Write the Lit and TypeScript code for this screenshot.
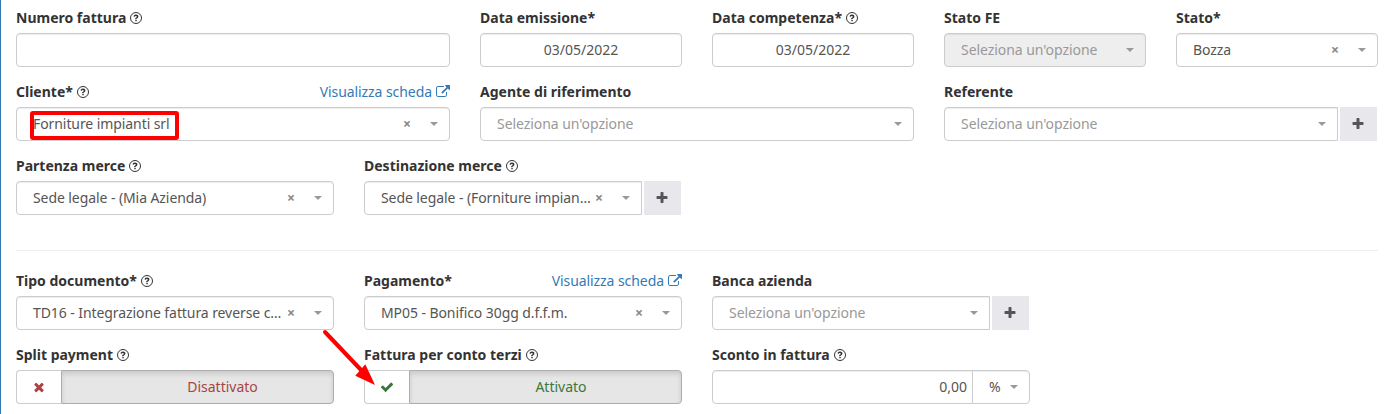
import { LitElement, html, svg, css, nothing } from "lit";
import { customElement } from "lit/decorators.js";

const shapes = {
  help: svg`<circle cx="768" cy="896" r="704" fill="none" stroke="currentColor" stroke-width="128"/><path transform="translate(-8 116) scale(.87)" d="M1004 1356v-142q0-14-9-23t-23-9h-152q-14 0-23 9t-9 23v142q0 14 9 23t23 9h152q14 0 23-9t9-23zm256-652q0-88-55.500-163t-138.500-116-170-41q-243 0-371 213-15 24 8 42l112 85q7 6 19 6 16 0 25-12 53-68 86-92 34-24 96-24 58 0 100.500 31t42.500 69q0 38-20 61t-68 45q-63 28-115.500 86.500t-52.500 125.500v26q0 14 9 23t23 9h152q14 0 23-9t9-23q0-19 21.500-49.500t54.500-49.500q32-18 49-28.500t46-35 44.500-48 28-60.500 12.500-81z"/>`,
  link: svg`<path d="M1408 928v320q0 119-84.500 203.500t-203.500 84.500h-832q-119 0-203.500-84.500t-84.500-203.500v-832q0-119 84.500-203.500t203.500-84.500h704q14 0 23 9t9 23v64q0 14-9 23t-23 9h-704q-66 0-113 47t-47 113v832q0 66 47 113t113 47h832q66 0 113-47t47-113v-320q0-14 9-23t23-9h64q14 0 23 9t9 23zm384-864v512q0 26-19 45t-45 19-45-19l-176-176-652 652q-10 10-23 10t-23-10l-114-114q-10-10-10-23t10-23l652-652-176-176q-19-19-19-45t19-45 45-19h512q26 0 45 19t19 45z"/>`,
  plus: svg`<path d="M1600 736v192q0 40-28 68t-68 28h-416v416q0 40-28 68t-68 28h-192q-40 0-68-28t-28-68v-416h-416q-40 0-68-28t-28-68v-192q0-40 28-68t68-28h416v-416q0-40 28-68t68-28h192q40 0 68 28t28 68v416h416q40 0 68 28t28 68z"/>`,
  times: svg`<path d="M1490 1322q0 40-28 68l-136 136q-28 28-68 28t-68-28l-294-294-294 294q-28 28-68 28t-68-28l-136-136q-28-28-28-68t28-68l294-294-294-294q-28-28-28-68t28-68l136-136q28-28 68-28t68 28l294 294 294-294q28-28 68-28t68 28l136 136q28 28 28 68t-28 68l-294 294 294 294q28 28 28 68z"/>`,
  check: svg`<path d="M1671 566q0 40-28 68l-724 724-136 136q-28 28-68 28t-68-28l-136-136-362-362q-28-28-28-68t28-68l136-136q28-28 68-28t68 28l294 295 656-657q28-28 68-28t68 28l136 136q28 28 28 68z"/>`,
};

const icon = (name: keyof typeof shapes) =>
  html`<svg class="icon ${name}" viewBox="0 0 ${name === "help" ? 1536 : 1792} 1792">${shapes[name]}</svg>`;

const label = (text: string, help = false, link = false) => html`
  <div class="label"><b>${text}</b>${help ? icon("help") : nothing}${
    link ? html`<a class="link">Visualizza scheda ${icon("link")}</a>` : nothing
  }</div>`;

interface SelectOptions {
  value?: string;
  disabled?: boolean;
  add?: boolean;
}

const select = ({ value, disabled, add }: SelectOptions = {}) => html`
  <div class="group">
    <div class="control select ${disabled ? "disabled" : ""} ${add ? "joined" : ""}">
      <span class="value ${value ? "" : "placeholder"}">${value ?? "Seleziona un'opzione"}</span>
      ${value ? html`<span class="clear">×</span>` : nothing}
      <span class="caret"></span>
    </div>
    ${add ? html`<div class="add">${icon("plus")}</div>` : nothing}
  </div>`;

@customElement("app-root")
export class AppRoot extends LitElement {
  static styles = css`
    :host {
      display: block;
      box-sizing: border-box;
      position: relative;
      height: 414px;
      overflow: hidden;
      padding: 8px 11px 0 15px;
      border-left: 1px solid #337ab7;
      background: #fff;
      color: #333;
      font: 14px/20px "Noto Sans", sans-serif;
    }
    * { box-sizing: border-box; }
    .row {
      display: grid;
      grid-template-columns: repeat(12, 86px);
      column-gap: 30px;
      margin-bottom: 15px;
    }
    .c2 { grid-column: span 2; }
    .c3 { grid-column: span 3; }
    .c4 { grid-column: span 4; }
    .label { display: flex; align-items: center; height: 20px; margin-bottom: 5px; white-space: nowrap; }
    .icon { width: 14px; height: 14px; fill: currentColor; flex: none; display: block; }
    .label .help { width: 12px; margin-left: 4px; }
    .link { display: flex; align-items: center; gap: 4px; margin-left: auto; color: #337ab7; letter-spacing: -0.07px; }
    .group { display: flex; height: 34px; }
    .control {
      flex: 1;
      min-width: 0;
      height: 34px;
      border: 1px solid #ccc;
      border-radius: 4px;
      box-shadow: inset 0 1px 1px rgba(0, 0, 0, 0.075);
      color: #555;
      line-height: 32px;
    }
    .date { text-align: center; }
    .select { display: flex; align-items: center; padding: 0 11px 0 16px; }
    .joined { border-radius: 4px 0 0 4px; }
    .disabled { background: #eee; }
    .value { flex: 1; min-width: 0; white-space: nowrap; letter-spacing: -0.08px; }
    .placeholder { color: #999; letter-spacing: -0.05px; }
    .clear { color: #888; font-weight: 700; width: 8px; margin-right: 19px; text-align: center; }
    .caret { border: 4px solid transparent; border-top-color: #999; border-bottom: 0; flex: none; }
    .add {
      display: grid;
      place-items: center;
      width: 37px;
      height: 34px;
      margin: 0 1px 0 2px;
      padding-right: 1px;
      background: #e8e7ec;
      color: #555;
    }
    .divider { height: 1px; background: #eee; margin: 35px 0 20px; }
    .switch { display: flex; height: 34px; text-align: center; line-height: 32px; }
    .mark {
      display: grid;
      place-items: center;
      width: 45px;
      border: 1px solid #ccc;
      border-right: 0;
      border-radius: 4px 0 0 4px;
    }
    .state {
      flex: 1;
      background: #e6e6e6;
      border: 1px solid #adadad;
      border-radius: 0 4px 4px 0;
      box-shadow: inset 0 3px 5px rgba(0, 0, 0, 0.125);
    }
    .off { color: #a94442; }
    .off .state { padding-left: 50px; }
    .on { color: #3c763d; }
    .on .state { padding-left: 31px; }
    .amount { text-align: right; padding-right: 5px; border-radius: 4px 0 0 4px; }
    .unit { flex: 0 0 58px; margin-left: -1px; border-radius: 0 4px 4px 0; }
    .overlay { position: absolute; left: -1px; top: 0; width: 1389px; height: 414px; pointer-events: none; }
  `;

  render() {
    return html`
      <div class="row">
        <div class="c4">${label("Numero fattura", true)}<div class="control"></div></div>
        <div class="c2">${label("Data emissione*")}<div class="control date">03/05/2022</div></div>
        <div class="c2">${label("Data competenza*", true)}<div class="control date">03/05/2022</div></div>
        <div class="c2">${label("Stato FE")}${select({ disabled: true })}</div>
        <div class="c2">${label("Stato*")}${select({ value: "Bozza" })}</div>
      </div>
      <div class="row">
        <div class="c4">${label("Cliente*", true, true)}${select({ value: "Forniture impianti srl" })}</div>
        <div class="c4">${label("Agente di riferimento")}${select()}</div>
        <div class="c4">${label("Referente")}${select({ add: true })}</div>
      </div>
      <div class="row">
        <div class="c3">${label("Partenza merce", true)}${select({ value: "Sede legale - (Mia Azienda)" })}</div>
        <div class="c3">${label("Destinazione merce", true)}${select({ value: "Sede legale - (Forniture impian…", add: true })}</div>
      </div>
      <div class="divider"></div>
      <div class="row">
        <div class="c3">${label("Tipo documento*", true)}${select({ value: "TD16 - Integrazione fattura reverse c…" })}</div>
        <div class="c3">${label("Pagamento*", false, true)}${select({ value: "MP05 - Bonifico 30gg d.f.f.m." })}</div>
        <div class="c3">${label("Banca azienda")}${select({ add: true })}</div>
      </div>
      <div class="row">
        <div class="c3">
          ${label("Split payment", true)}
          <div class="switch off"><div class="mark">${icon("times")}</div><div class="state">Disattivato</div></div>
        </div>
        <div class="c3">
          ${label("Fattura per conto terzi", true)}
          <div class="switch on"><div class="mark">${icon("check")}</div><div class="state">Attivato</div></div>
        </div>
        <div class="c3">
          ${label("Sconto in fattura", true)}
          <div class="group">
            <div class="control amount">0,00</div>
            <div class="control select unit"><span class="value">%</span><span class="caret"></span></div>
          </div>
        </div>
      </div>
      <svg class="overlay" viewBox="0 0 1389 414">
        <rect x="32" y="113" width="145" height="25" rx="1" fill="none" stroke="#f00" stroke-width="4"/>
        <path d="M325 332L362 371" stroke="#f00" stroke-width="4" stroke-linecap="round"/>
        <path d="M375 385L355.300 375.800L365.300 364.300Z" fill="#f00"/>
      </svg>
    `;
  }
}
